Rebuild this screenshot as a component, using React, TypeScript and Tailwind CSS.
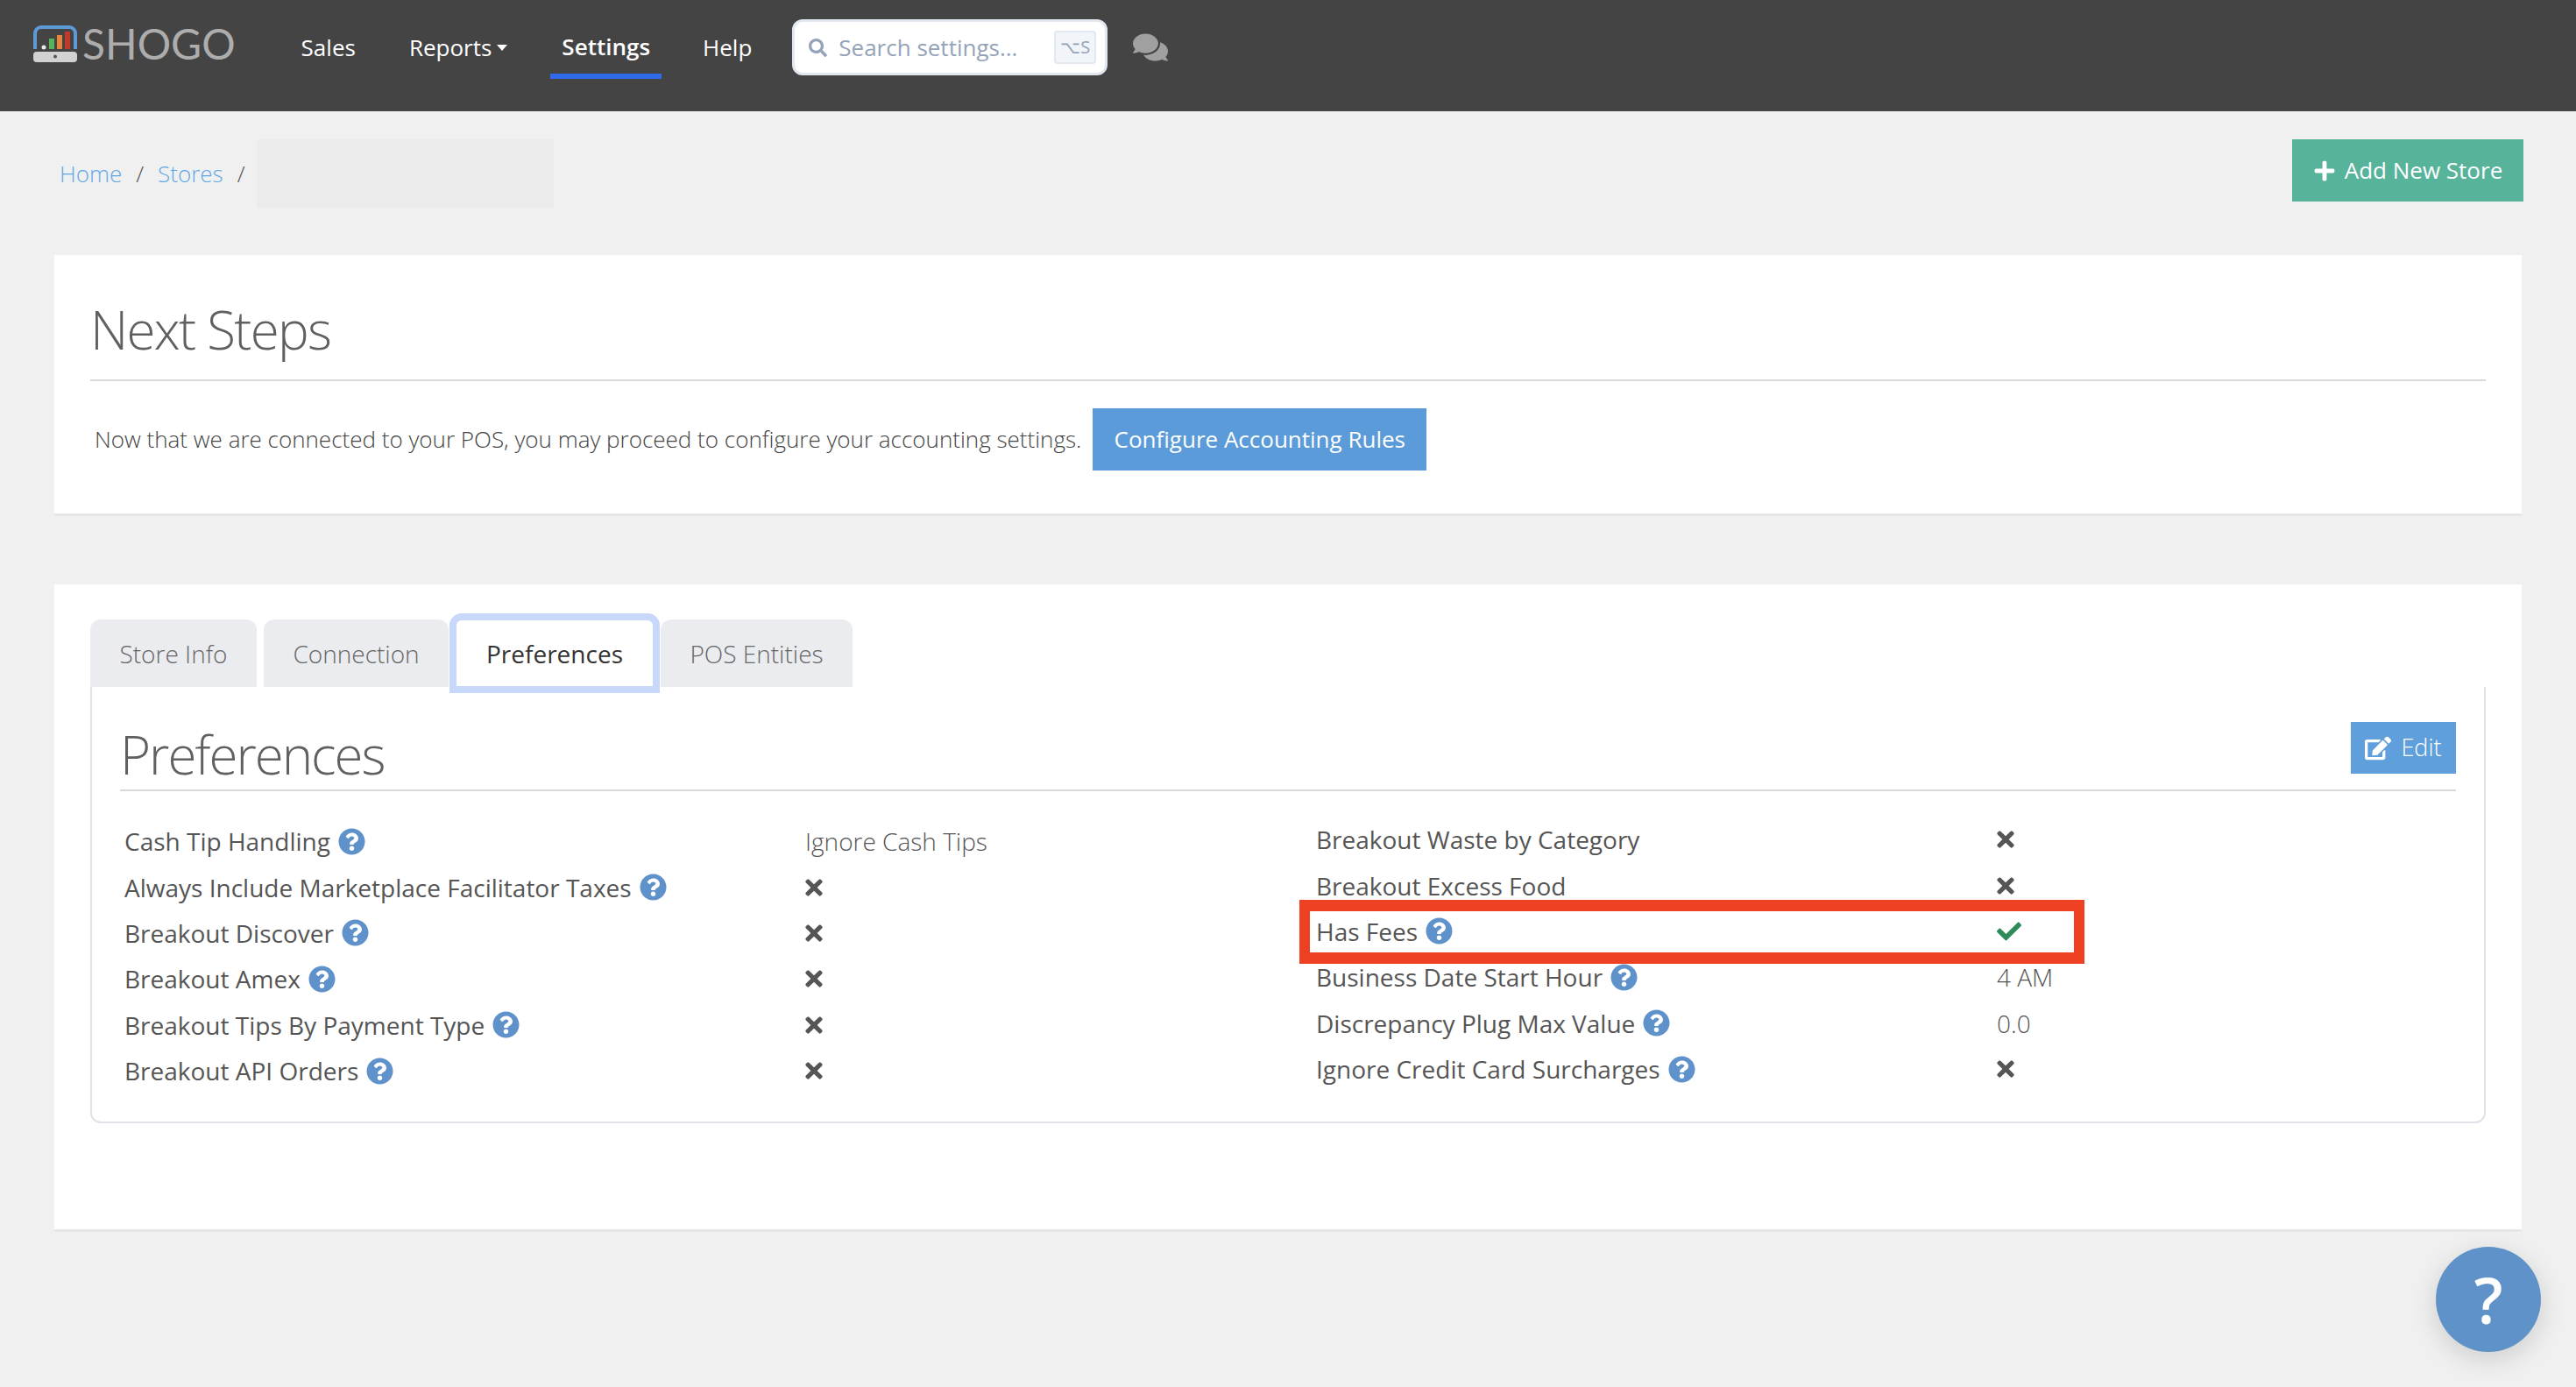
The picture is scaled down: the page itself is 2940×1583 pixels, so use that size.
import { FaCheck, FaComments, FaEdit, FaPlus, FaQuestionCircle, FaSearch, FaTimes } from "react-icons/fa";

type Row = { label: string; help?: boolean; value?: string; checked?: boolean };

const leftRows: Row[] = [
  { label: "Cash Tip Handling", help: true, value: "Ignore Cash Tips" },
  { label: "Always Include Marketplace Facilitator Taxes", help: true },
  { label: "Breakout Discover", help: true },
  { label: "Breakout Amex", help: true },
  { label: "Breakout Tips By Payment Type", help: true },
  { label: "Breakout API Orders", help: true },
];

const rightRows: Row[] = [
  { label: "Breakout Waste by Category" },
  { label: "Breakout Excess Food" },
  { label: "Has Fees", help: true, checked: true },
  { label: "Business Date Start Hour", help: true, value: "4 AM" },
  { label: "Discrepancy Plug Max Value", help: true, value: "0.0" },
  { label: "Ignore Credit Card Surcharges", help: true },
];

function Logo() {
  return (
    <div className="flex items-center mt-[-2px]">
      <svg width="52" height="42" viewBox="0 0 52 42">
        <path d="M3 27V9a7 7 0 0 1 7-7h32a7 7 0 0 1 7 7v18" fill="none" stroke="#5e9ad6" strokeWidth="4" />
        <circle cx="13" cy="25" r="2.5" fill="#e8e8e8" />
        <rect x="19" y="15" width="6" height="12" fill="#55b35a" />
        <rect x="28" y="11" width="6" height="16" fill="#e8853a" />
        <rect x="37" y="7" width="6" height="20" fill="#c0392b" />
        <rect x="1" y="30" width="50" height="12" rx="4" fill="#d2d2d2" />
        <circle cx="26" cy="35.500" r="2" fill="#555" />
      </svg>
      <span className="ml-[5px] font-['Lato'] font-normal text-[48px] leading-none text-[#adadad]">SHOGO</span>
    </div>
  );
}

function PrefRow({ row }: { row: Row }) {
  return (
    <div className="flex items-center h-[52.4px]">
      <div className="flex items-center w-[777px] gap-[9px] text-[#555555] text-[28px]">
        <span>{row.label}</span>
        {row.help && <FaQuestionCircle className="text-[#5f92cb] text-[31px]" />}
      </div>
      {row.value ? (
        <span className="font-light text-[#555555] text-[28px]">{row.value}</span>
      ) : row.checked ? (
        <FaCheck className="text-[#2f8a5b] text-[28px]" />
      ) : (
        <FaTimes className="ml-[-4px] text-[#555555] text-[28px]" />
      )}
    </div>
  );
}

export default function App() {
  return (
    <div className="relative min-h-screen h-[1583px] bg-[#f0f0f0] font-['Open_Sans',sans-serif] overflow-hidden">
      <header className="flex items-start h-[127px] bg-[#444444] pl-[37px] pt-[28px]">
        <Logo />
        <nav className="flex ml-[62px] text-white text-[26px] h-[62px]">
          <a className="flex items-center h-[53px] px-[13px]">Sales</a>
          <a className="flex items-center h-[53px] gap-[6px] ml-[35px] px-[13px]">
            Reports
            <span className="border-x-[6px] border-t-[7px] border-x-transparent border-t-white" />
          </a>
          <a className="flex items-center h-[62px] pb-[6px] ml-[36px] px-[13px] font-semibold border-b-[6px] border-[#2f6bea]">Settings</a>
          <a className="flex items-center h-[53px] ml-[34px] px-[13px]">Help</a>
        </nav>
        <div className="flex items-center ml-[33px] mt-[-6px] w-[360px] h-[64px] bg-white border-[3px] border-[#e2e8f0] rounded-[12px] pl-[16px] pr-[10px]">
          <FaSearch className="text-[#94a3b8] text-[21px]" />
          <span className="ml-[13px] text-[26px] text-[#94a3b8]">Search settings...</span>
          <span className="ml-auto flex items-center justify-center w-[48px] h-[38px] bg-[#f1f5f9] border-2 border-[#e2e8f0] rounded-[4px] text-[20px] text-[#94a3b8]">⌥S</span>
        </div>
        <FaComments className="ml-[29px] mt-[6px] text-[#a0a0a0] text-[40px]" />
      </header>

      <div className="flex items-start justify-between pl-[68px] pr-[60px] pt-[32px] h-[164px]">
        <div className="flex items-center gap-[16px] text-[26px] font-light text-[#555555]">
          <a className="text-[#5fa8e6]">Home</a>
          <span>/</span>
          <a className="text-[#5fa8e6]">Stores</a>
          <span>/</span>
          <div className="w-[339px] h-[78px] bg-[#ebebeb] ml-[-3px]" />
        </div>
        <button className="flex items-center justify-center gap-[10px] w-[264px] h-[71px] bg-[#57b39a] text-white text-[26px]">
          <FaPlus className="text-[26px]" />
          Add New Store
        </button>
      </div>

      <section className="mx-[62px] w-[2816px] h-[295px] bg-white shadow-[0_3px_0_#e6e6e6] px-[41px] pt-[50px]">
        <h2 className="font-light text-[60px] tracking-[-1.7px] leading-[70px] text-[#606060]">Next Steps</h2>
        <div className="mt-[22px] border-t-2 border-[#d9d9d9]" />
        <div className="flex items-center mt-[31px]">
          <span className="ml-[5px] text-[26px] font-light text-[#444444]">Now that we are connected to your POS, you may proceed to configure your accounting settings.</span>
          <button className="ml-[13px] w-[381px] h-[71px] bg-[#5b9bd9] text-white text-[26px]">Configure Accounting Rules</button>
        </div>
      </section>

      <section className="mx-[62px] mt-[81px] w-[2816px] h-[736px] bg-white shadow-[0_3px_0_#e6e6e6] px-[41px] pt-[40px]">
        <div className="flex items-end h-[77px] text-[28px] text-[#666666] font-light">
          <div className="flex items-center justify-center w-[190px] h-full rounded-t-[12px] bg-[#ebecef]">Store Info</div>
          <div className="flex items-center justify-center w-[211px] h-full ml-[8px] rounded-t-[12px] bg-[#ebecef]">Connection</div>
          <div className="relative z-10 flex items-center justify-center w-[240px] h-[91px] ml-[1px] mb-[-7px] rounded-t-[14px] border-[8px] border-[#c8d8fa] bg-white text-[#333333] font-normal">Preferences</div>
          <div className="flex items-center justify-center w-[219px] h-full ml-[1px] rounded-t-[12px] bg-[#ebecef]">POS Entities</div>
        </div>
        <div className="h-[498px] border-x-2 border-b-2 border-[#dfe3e8] rounded-b-[12px] px-[32px]">
          <div className="flex items-end justify-between h-[119px] border-b-2 border-[#d9d9d9] pb-[18px]">
            <h2 className="font-light text-[60px] tracking-[-2px] leading-[70px] text-[#606060] mb-[-13px]">Preferences</h2>
            <button className="flex items-center justify-center gap-[11px] w-[120px] h-[59px] bg-[#5f9fdb] text-white text-[27px] font-light">
              <FaEdit className="text-[30px]" />
              Edit
            </button>
          </div>
          <div className="flex mt-[31px] pl-[5px]">
            <div className="w-[1360px]">
              {leftRows.map((row) => (
                <PrefRow key={row.label} row={row} />
              ))}
            </div>
            <div className="mt-[-2px]">
              {rightRows.map((row) => (
                <PrefRow key={row.label} row={row} />
              ))}
            </div>
          </div>
        </div>
      </section>

      <div className="absolute left-[1483px] top-[1027px] w-[896px] h-[73px] border-x-[12px] border-y-[13px] border-[#ee4124]" />

      <button className="absolute left-[2780px] top-[1423px] flex items-center justify-center w-[120px] h-[120px] rounded-full bg-[#5f92c9] text-white text-[72px] font-semibold shadow-[0_8px_30px_rgba(0,0,0,0.15)]">?</button>
    </div>
  );
}
